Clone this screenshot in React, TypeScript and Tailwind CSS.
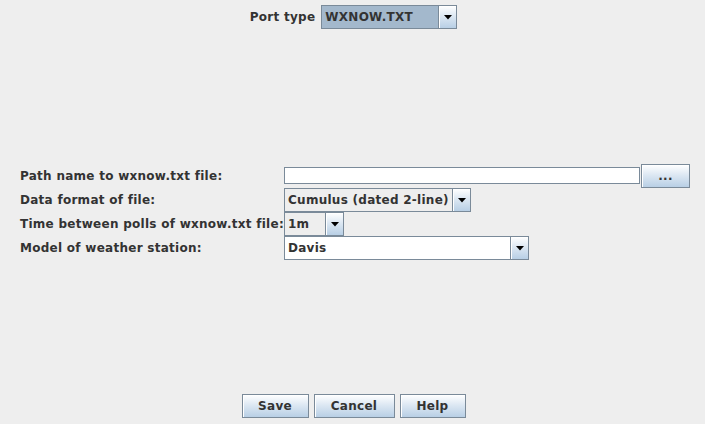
import React from 'react';

const font = { fontFamily: '"DejaVu Sans", Verdana, sans-serif', letterSpacing: '0.27px' };

const Arrow = () => (
  <svg width="8" height="5" viewBox="0 0 8 5" className="block">
    <path d="M0 0 H8 L4 4.5 Z" fill="#000" />
  </svg>
);

interface ComboProps {
  text: string;
  width: number;
  bg: string;
}

const Combo: React.FC<ComboProps> = ({ text, width, bg }) => (
  <div className="flex h-[24px] border border-[#7a8a99]" style={{ width }}>
    <div className={`flex flex-1 items-center pl-[3px] text-[12px] font-bold text-[#333333] ${bg}`}>
      {text}
    </div>
    <div className="flex w-[18px] items-center justify-center border-l border-[#7a8a99] bg-[linear-gradient(to_bottom,#ffffff,#dde8f3_45%,#b8cfe5)] shadow-[inset_1px_1px_0_#ffffff]">
      <Arrow />
    </div>
  </div>
);

const Button: React.FC<{ label: string; width: number }> = ({ label, width }) => (
  <button
    className="flex h-[24px] items-center justify-center border border-[#7a8a99] bg-[linear-gradient(to_bottom,#ffffff,#dde8f3_45%,#b8cfe5)] text-[12px] font-bold text-[#333333] shadow-[inset_1px_1px_0_#ffffff]"
    style={{ width }}
  >
    {label}
  </button>
);

const labelCls = 'text-[12px] font-bold text-[#333333] whitespace-nowrap';

export default function App() {
  return (
    <div className="flex h-[424px] w-[705px] flex-col bg-[#eeeeee]" style={font}>
      <div className="mt-[5px] flex items-center justify-center gap-[6px] pl-[2px]">
        <span className={labelCls}>Port type</span>
        <Combo text="WXNOW.TXT" width={136} bg="bg-[#a3b8cc]" />
      </div>

      <div className="mt-[134px] grid grid-cols-[264px_auto] pl-[20px]">
        <div className={`${labelCls} flex h-[25px] items-center`}>Path name to wxnow.txt file:</div>
        <div className="flex h-[25px] items-center">
          <div className="h-[17px] w-[356px] border border-[#7a8a99] bg-white shadow-[inset_-1px_-1px_0_#ffffff]" />
          <div className="ml-px">
            <Button label="..." width={49} />
          </div>
        </div>

        <div className={`${labelCls} flex h-[24px] items-center`}>Data format of file:</div>
        <div className="flex h-[24px] items-center">
          <Combo text="Cumulus (dated 2-line)" width={187} bg="bg-[#eeeeee]" />
        </div>

        <div className={`${labelCls} flex h-[24px] items-center`}>Time between polls of wxnow.txt file:</div>
        <div className="flex h-[24px] items-center">
          <Combo text="1m" width={60} bg="bg-[#eeeeee]" />
        </div>

        <div className={`${labelCls} flex h-[24px] items-center`}>Model of weather station:</div>
        <div className="flex h-[24px] items-center">
          <Combo text="Davis" width={245} bg="bg-white" />
        </div>
      </div>

      <div className="mt-[134px] flex justify-center gap-[5px] pl-[2px]">
        <Button label="Save" width={67} />
        <Button label="Cancel" width={81} />
        <Button label="Help" width={66} />
      </div>
    </div>
  );
}
